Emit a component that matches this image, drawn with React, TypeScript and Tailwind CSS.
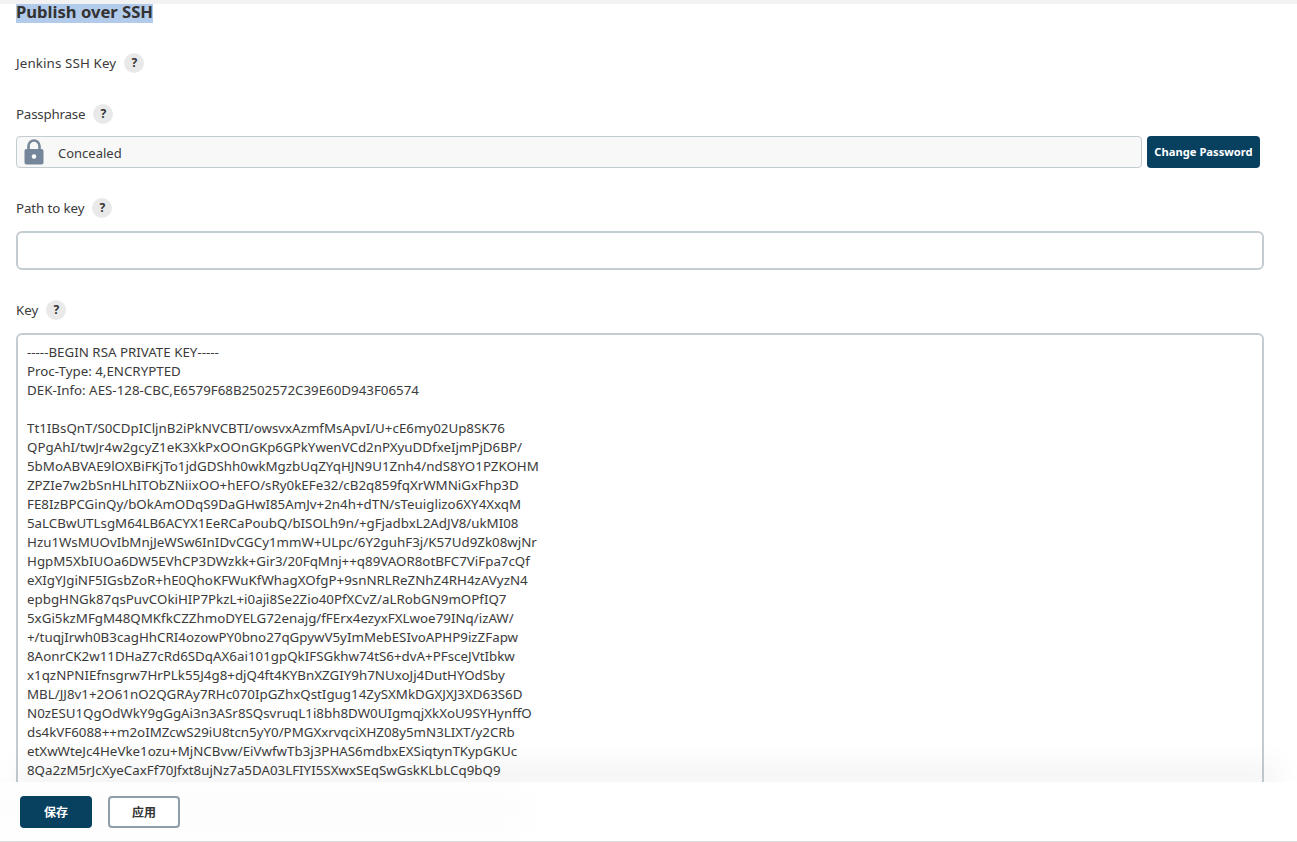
const KEY_LINES = [
  "-----BEGIN RSA PRIVATE KEY-----",
  "Proc-Type: 4,ENCRYPTED",
  "DEK-Info: AES-128-CBC,E6579F68B2502572C39E60D943F06574",
  "",
  "Tt1IBsQnT/S0CDpICljnB2iPkNVCBTI/owsvxAzmfMsApvI/U+cE6my02Up8SK76",
  "QPgAhI/twJr4w2gcyZ1eK3XkPxOOnGKp6GPkYwenVCd2nPXyuDDfxeIjmPjD6BP/",
  "5bMoABVAE9lOXBiFKjTo1jdGDShh0wkMgzbUqZYqHJN9U1Znh4/ndS8YO1PZKOHM",
  "ZPZIe7w2bSnHLhITObZNiixOO+hEFO/sRy0kEFe32/cB2q859fqXrWMNiGxFhp3D",
  "FE8IzBPCGinQy/bOkAmODqS9DaGHwI85AmJv+2n4h+dTN/sTeuiglizo6XY4XxqM",
  "5aLCBwUTLsgM64LB6ACYX1EeRCaPoubQ/bISOLh9n/+gFjadbxL2AdJV8/ukMI08",
  "Hzu1WsMUOvIbMnjJeWSw6InIDvCGCy1mmW+ULpc/6Y2guhF3j/K57Ud9Zk08wjNr",
  "HgpM5XbIUOa6DW5EVhCP3DWzkk+Gir3/20FqMnj++q89VAOR8otBFC7ViFpa7cQf",
  "eXIgYJgiNF5IGsbZoR+hE0QhoKFWuKfWhagXOfgP+9snNRLReZNhZ4RH4zAVyzN4",
  "epbgHNGk87qsPuvCOkiHIP7PkzL+i0aji8Se2Zio40PfXCvZ/aLRobGN9mOPfIQ7",
  "5xGi5kzMFgM48QMKfkCZZhmoDYELG72enajg/fFErx4ezyxFXLwoe79INq/izAW/",
  "+/tuqjIrwh0B3cagHhCRI4ozowPY0bno27qGpywV5yImMebESIvoAPHP9izZFapw",
  "8AonrCK2w11DHaZ7cRd6SDqAX6ai101gpQkIFSGkhw74tS6+dvA+PFsceJVtIbkw",
  "x1qzNPNIEfnsgrw7HrPLk55J4g8+djQ4ft4KYBnXZGIY9h7NUxoJj4DutHYOdSby",
  "MBL/JJ8v1+2O61nO2QGRAy7RHc070IpGZhxQstIgug14ZySXMkDGXJXJ3XD63S6D",
  "N0zESU1QgOdWkY9gGgAi3n3ASr8SQsvruqL1i8bh8DW0UIgmqjXkXoU9SYHynffO",
  "ds4kVF6088++m2oIMZcwS29iU8tcn5yY0/PMGXxrvqciXHZ08y5mN3LIXT/y2CRb",
  "etXwWteJc4HeVke1ozu+MjNCBvw/EiVwfwTb3j3PHAS6mdbxEXSiqtynTKypGKUc",
  "8Qa2zM5rJcXyeCaxFf70Jfxt8ujNz7a5DA03LFIYI5SXwxSEqSwGskKLbLCq9bQ9",
];

function HelpBadge() {
  return (
    <span className="flex h-5 w-5 items-center justify-center rounded-full bg-[#e9e9e9] text-xs font-bold tracking-normal text-[#333]">
      ?
    </span>
  );
}

function FieldLabel({ text, className }: { text: string; className: string }) {
  return (
    <div className={`flex h-5 items-center gap-2 text-[13.33px] text-[#3b3b3b] ${className}`}>
      <span className="pt-[2px]">{text}</span>
      <HelpBadge />
    </div>
  );
}

function LockIcon() {
  return (
    <svg width="22" height="26" viewBox="0 0 22 26" aria-hidden>
      <path d="M5.5 11V7a5.5 5.5 0 0 1 11 0v4" fill="none" stroke="#76869a" strokeWidth="2.6" />
      <rect x="1.5" y="10" width="19" height="15.5" rx="2" fill="#76869a" />
      <circle cx="11" cy="17.5" r="2.3" fill="#fff" />
    </svg>
  );
}

export default function App() {
  return (
    <div
      className="relative h-[842px] overflow-hidden bg-white"
      style={{ fontFamily: '"Noto Sans", "Noto Sans CJK SC", sans-serif' }}
    >
      <div className="h-1 bg-[#f2f2f2]" />
      <div className="pl-4 pr-[33px]">
        <h1 className="w-fit bg-[#b3cbea] pb-1 text-[16.6px]/[15px] font-bold text-[#333]">
          Publish over SSH
        </h1>

        <FieldLabel text="Jenkins SSH Key" className="mt-[30px] tracking-[0.13px]" />
        <FieldLabel text="Passphrase" className="mt-[31px] tracking-[-0.2px]" />

        <div className="mt-3 flex gap-[5px] pr-1">
          <div className="flex h-8 flex-1 items-center gap-[13px] rounded border border-[#c3ccd1] bg-[#f8f8f8] pl-[6px] text-[13px] text-[#3b3b3b]">
            <LockIcon />
            <span className="pt-[3px]">Concealed</span>
          </div>
          <button
            type="button"
            className="h-8 w-[113px] rounded bg-[#084060] pt-px text-[11.2px] font-bold text-white"
          >
            Change Password
          </button>
        </div>

        <FieldLabel text="Path to key" className="mt-[30px] tracking-[-0.1px]" />
        <input
          type="text"
          className="mt-[13px] block h-[39px] w-full rounded-md border-2 border-[#c3ccd1] bg-white"
        />

        <FieldLabel text="Key" className="mt-[30px]" />
        <div className="mt-[13px] h-[600px] rounded-md border-2 border-[#c3ccd1] bg-white px-[9px] py-[8px] text-[13.33px]/[19px] whitespace-pre text-[#3b3b3b]">
          {KEY_LINES.map((line, i) => (
            <div key={i} className="h-[19px]">
              {line}
            </div>
          ))}
        </div>
      </div>

      <div className="absolute inset-x-0 bottom-0 flex h-[60px] items-start gap-4 overflow-visible border-b border-[#dcdcdc] bg-white px-5 pt-[14px] shadow-[0_-33px_32px_-17px_rgba(0,0,0,0.06)]">
        <div className="pointer-events-none absolute top-2 left-0 h-10 w-[520px] bg-black/[0.012] blur-lg" />
        <button
          type="button"
          className="relative h-8 w-[72px] rounded bg-[#084060] pt-px text-xs font-bold text-white"
        >
          保存
        </button>
        <button
          type="button"
          className="relative h-8 w-[72px] rounded border-2 border-[#8f9dab] bg-white pt-px text-xs font-bold text-[#333]"
        >
          应用
        </button>
      </div>
    </div>
  );
}
